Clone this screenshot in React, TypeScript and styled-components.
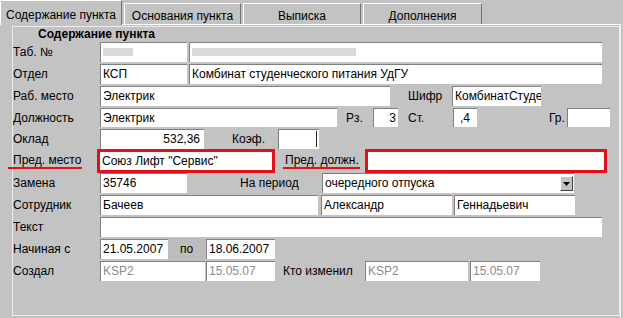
import React from "react";
import styled, { createGlobalStyle } from "styled-components";

const GlobalStyle = createGlobalStyle`
  html, body {
    margin: 0;
    padding: 0;
    background: #c3c3c3;
  }
  body {
    font-family: "Liberation Sans", Arial, sans-serif;
    font-size: 12px;
  }
`;

const Window = styled.div`
  width: 623px;
  height: 318px;
  background: #c3c3c3;
  display: flex;
  flex-direction: column;
  overflow: hidden;
  color: #000;
`;

const TabBar = styled.div`
  display: flex;
  align-items: flex-end;
  gap: 2px;
  height: 24px;
`;

const Tab = styled.div<{ $w: number; $active?: boolean }>`
  width: ${(p) => p.$w}px;
  height: ${(p) => (p.$active ? 25 : 21)}px;
  box-sizing: border-box;
  border-top: 1px solid #fff;
  border-left: 1px solid #fff;
  border-right: 1px solid #6f6f6f;
  background: #c3c3c3;
  display: flex;
  align-items: center;
  justify-content: center;
  padding-top: 3px;
  position: relative;
  z-index: 1;
  margin-bottom: ${(p) => (p.$active ? -1 : 0)}px;
  white-space: nowrap;
`;

const Panel = styled.div`
  flex: 1;
  display: flex;
  flex-direction: column;
  border-top: 1px solid #fff;
  border-right: 1px solid #f2f2f2;
  margin-right: 2px;
  padding: 1px 0 2px 12px;
`;

const InnerBox = styled.div`
  flex: 1;
  display: flex;
  flex-direction: column;
  gap: 2px;
  border: 1px solid #ececec;
`;

const Header = styled.div`
  height: 13px;
  line-height: 15px;
  padding-left: 25px;
  font-weight: bold;
`;

const Row = styled.div<{ $h?: number }>`
  display: flex;
  align-items: center;
  height: ${(p) => p.$h ?? 20}px;
`;

const Label = styled.div<{ $w: number; $ml?: number }>`
  width: ${(p) => p.$w}px;
  margin-left: ${(p) => p.$ml ?? 0}px;
  flex-shrink: 0;
  white-space: nowrap;
`;

const Field = styled.div<{
  $w: number;
  $ml?: number;
  $align?: "left" | "right";
  $muted?: boolean;
  $pl?: number;
  $pr?: number;
}>`
  width: ${(p) => p.$w}px;
  height: 100%;
  margin-left: ${(p) => p.$ml ?? 0}px;
  flex-shrink: 0;
  box-sizing: border-box;
  background: #fff;
  border-top: 1px solid #7f7f7f;
  border-left: 1px solid #7f7f7f;
  padding: 0 ${(p) => p.$pr ?? 2}px 0 ${(p) => p.$pl ?? 2}px;
  line-height: 19px;
  text-align: ${(p) => p.$align ?? "left"};
  color: ${(p) => (p.$muted ? "#8a8a8a" : "#000")};
  white-space: nowrap;
  overflow: hidden;
`;

const Blur = styled.span<{ $w: number }>`
  display: inline-block;
  vertical-align: middle;
  width: ${(p) => p.$w}px;
  height: 8px;
  margin-top: -2px;
  background: #d9d9d9;
`;

const Caret = styled.span`
  float: right;
  width: 1px;
  height: 16px;
  margin-top: 1px;
  background: #222;
`;

const RedBox = styled.div<{ $w: number; $ml?: number }>`
  width: ${(p) => p.$w}px;
  height: 24px;
  margin-left: ${(p) => p.$ml ?? 0}px;
  flex-shrink: 0;
  box-sizing: border-box;
  border: 3px solid #e3101a;
  background: #fff;
  padding-left: 2px;
  line-height: 18px;
  white-space: nowrap;
`;

const Marked = styled.span<{ $lead: number }>`
  display: inline-block;
  line-height: 13px;
  margin-left: -${(p) => p.$lead}px;
  padding-left: ${(p) => p.$lead}px;
  padding-right: 1px;
  border-bottom: 2px solid #e3101a;
`;

const Select = styled(Field)`
  display: flex;
  align-items: center;
  justify-content: space-between;
  padding-right: 1px;
`;

const DropButton = styled.div`
  width: 13px;
  height: 15px;
  box-sizing: border-box;
  background: #c3c3c3;
  border: 1px solid;
  border-color: #fff #404040 #404040 #fff;
  display: flex;
  align-items: center;
  justify-content: center;
`;

const PoBlock = styled.div`
  width: 37px;
  height: 22px;
  flex-shrink: 0;
  background: #bcbcbc;
  display: flex;
  align-items: center;
  justify-content: center;
`;

export default function App() {
  return (
    <>
      <GlobalStyle />
      <Window>
        <TabBar>
          <Tab $w={122} $active>
            Содержание пункта
          </Tab>
          <Tab $w={117}>Основания пункта</Tab>
          <Tab $w={118}>Выписка</Tab>
          <Tab $w={119}>Дополнения</Tab>
        </TabBar>
        <Panel>
          <InnerBox>
            <Header>Содержание пункта</Header>

            <Row>
              <Label $w={87}>Таб. №</Label>
              <Field $w={87}>
                <Blur $w={30} />
              </Field>
              <Field $w={413} $ml={2}>
                <Blur $w={164} />
              </Field>
            </Row>

            <Row>
              <Label $w={87}>Отдел</Label>
              <Field $w={87}>КСП</Field>
              <Field $w={413} $ml={2}>
                Комбинат студенческого питания УдГУ
              </Field>
            </Row>

            <Row>
              <Label $w={87}>Раб. место</Label>
              <Field $w={290}>Электрик</Field>
              <Label $w={44} $ml={18}>
                Шифр
              </Label>
              <Field $w={89}>КомбинатСтуденческогоПитания</Field>
            </Row>

            <Row $h={19}>
              <Label $w={87}>Должность</Label>
              <Field $w={237}>Электрик</Field>
              <Label $w={27} $ml={9}>
                Рз.
              </Label>
              <Field $w={25} $align="right">
                3
              </Field>
              <Label $w={45} $ml={10}>
                Ст.
              </Label>
              <Field $w={24} $pl={6}>
                ,4
              </Field>
              <Label $w={18} $ml={72}>
                Гр.
              </Label>
              <Field $w={43} />
            </Row>

            <Row>
              <Label $w={87}>Оклад</Label>
              <Field $w={104} $align="right" $pr={4}>
                532,36
              </Field>
              <Label $w={46} $ml={28}>
                Коэф.
              </Label>
              <Field $w={41}>
                <Caret />
              </Field>
            </Row>

            <Row>
              <Label $w={87}>
                <Marked $lead={5}>Пред. место</Marked>
              </Label>
              <RedBox $w={178} $ml={-3}>
                Союз Лифт "Сервис"
              </RedBox>
              <Label $w={80} $ml={10}>
                <Marked $lead={2}>Пред. должн.</Marked>
              </Label>
              <RedBox $w={242} />
            </Row>

            <Row>
              <Label $w={87}>Замена</Label>
              <Field $w={87}>35746</Field>
              <Label $w={82} $ml={53}>
                На период
              </Label>
              <Select $w={252}>
                <span>очередного отпуска</span>
                <DropButton>
                  <svg width="7" height="4" viewBox="0 0 7 4">
                    <polygon points="0,0 7,0 3.5,4" fill="#000" />
                  </svg>
                </DropButton>
              </Select>
            </Row>

            <Row>
              <Label $w={87}>Сотрудник</Label>
              <Field $w={218}>Бачеев</Field>
              <Field $w={131} $ml={3}>
                Александр
              </Field>
              <Field $w={121} $ml={2}>
                Геннадьевич
              </Field>
            </Row>

            <Row>
              <Label $w={87}>Текст</Label>
              <Field $w={502} />
            </Row>

            <Row>
              <Label $w={87}>Начиная с</Label>
              <Field $w={68}>21.05.2007</Field>
              <PoBlock>по</PoBlock>
              <Field $w={69} $ml={1}>
                18.06.2007
              </Field>
            </Row>

            <Row>
              <Label $w={87}>Создал</Label>
              <Field $w={105} $muted>
                KSP2
              </Field>
              <Field $w={69} $ml={1} $muted>
                15.05.07
              </Field>
              <Label $w={82} $ml={8}>
                Кто изменил
              </Label>
              <Field $w={103} $muted>
                KSP2
              </Field>
              <Field $w={70} $ml={2} $muted>
                15.05.07
              </Field>
            </Row>
          </InnerBox>
        </Panel>
      </Window>
    </>
  );
}
